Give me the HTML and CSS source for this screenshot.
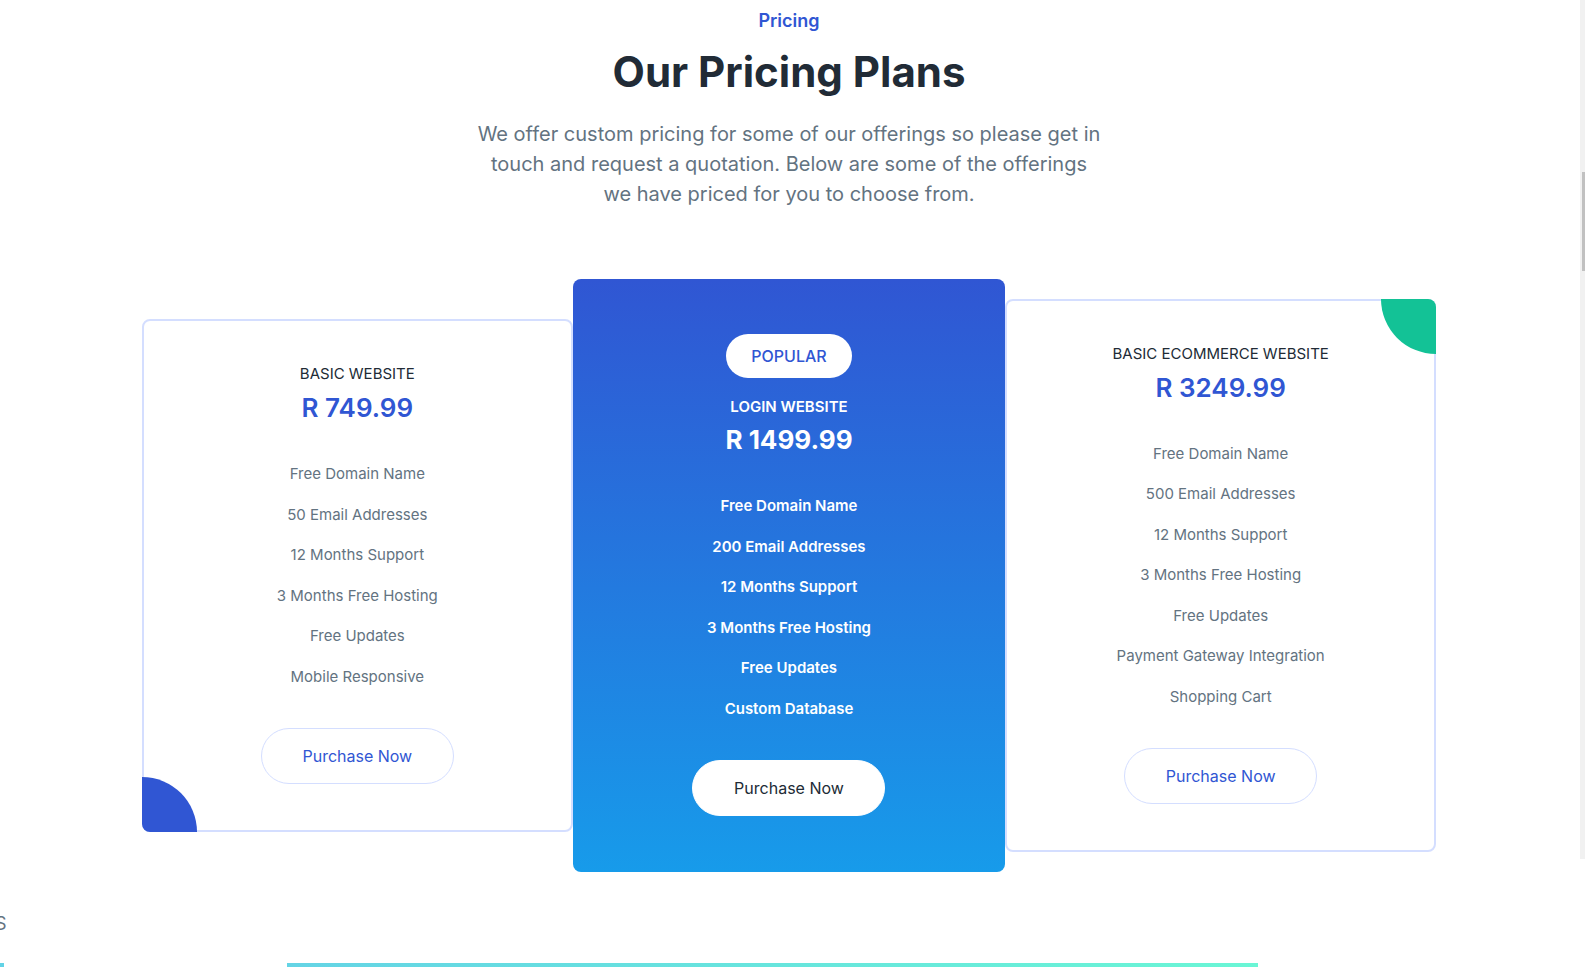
FILE: index.html
```html
<!DOCTYPE html>
<html lang="en">
<head>
    <meta charset="UTF-8">
    <meta name="viewport" content="width=device-width, initial-scale=1.0">
    <title>Pricing</title>
    <link rel="stylesheet" href="styles.css">
</head>
<body>
    <section class="pricing">
        <div class="pricing-head">
            <span class="eyebrow">Pricing</span>
            <h2 class="pricing-title">Our Pricing Plans</h2>
            <p class="pricing-lead">We offer custom pricing for some of our offerings so please get in touch and request a quotation. Below are some of the offerings we have priced for you to choose from.</p>
        </div>

        <div class="plans">
            <div class="plan">
                <h3 class="plan-name">Basic Website</h3>
                <p class="plan-price">R 749.99</p>
                <ul class="plan-features">
                    <li>Free Domain Name</li>
                    <li>50 Email Addresses</li>
                    <li>12 Months Support</li>
                    <li>3 Months Free Hosting</li>
                    <li>Free Updates</li>
                    <li>Mobile Responsive</li>
                </ul>
                <a href="#" class="plan-btn">Purchase Now</a>
                <span class="plan-shape shape-blue"></span>
            </div>

            <div class="plan plan-popular">
                <span class="plan-badge">POPULAR</span>
                <h3 class="plan-name">Login Website</h3>
                <p class="plan-price">R 1499.99</p>
                <ul class="plan-features">
                    <li>Free Domain Name</li>
                    <li>200 Email Addresses</li>
                    <li>12 Months Support</li>
                    <li>3 Months Free Hosting</li>
                    <li>Free Updates</li>
                    <li>Custom Database</li>
                </ul>
                <a href="#" class="plan-btn">Purchase Now</a>
            </div>

            <div class="plan">
                <h3 class="plan-name">Basic Ecommerce Website</h3>
                <p class="plan-price">R 3249.99</p>
                <ul class="plan-features">
                    <li>Free Domain Name</li>
                    <li>500 Email Addresses</li>
                    <li>12 Months Support</li>
                    <li>3 Months Free Hosting</li>
                    <li>Free Updates</li>
                    <li>Payment Gateway Integration</li>
                    <li>Shopping Cart</li>
                </ul>
                <a href="#" class="plan-btn">Purchase Now</a>
                <span class="plan-shape shape-green"></span>
            </div>
        </div>
    </section>

    <section class="next">
        <p class="next-label">S</p>
        <div class="next-bars">
            <span class="bar bar-edge"></span>
            <span class="bar bar-main"></span>
        </div>
    </section>

    <div class="scrollbar"><div class="scrollbar-thumb"></div></div>
</body>
</html>
```

FILE: styles.css
```css
* {
    margin: 0;
    padding: 0;
    box-sizing: border-box;
}

html,
body {
    overflow: hidden;
}

body {
    background: #fff;
    font-family: Inter, 'Noto Sans', sans-serif;
    color: #637381;
    padding-right: 7px;
    height: 967px;
}

.pricing {
    padding-top: 7px;
}

.pricing-head {
    display: flex;
    flex-direction: column;
    align-items: center;
    text-align: center;
}

.eyebrow {
    display: block;
    font-size: 18px;
    line-height: 28px;
    font-weight: 600;
    color: #3056d3;
}

.pricing-title {
    margin-top: 11px;
    font-size: 42px;
    line-height: 52.8px;
    font-weight: 700;
    color: #212b36;
}

.pricing-lead {
    margin-top: 20px;
    max-width: 624px;
    font-size: 20px;
    line-height: 30px;
    color: #637381;
}

.plans {
    width: 1295px;
    margin: 70px auto 0;
    display: grid;
    grid-template-columns: repeat(3, 1fr);
    align-items: center;
}

.plan {
    position: relative;
    display: flex;
    flex-direction: column;
    align-items: center;
    text-align: center;
    background: #fff;
    border: 2px solid #d4deff;
    border-radius: 8px;
    padding: 41px 20px 46px;
}

.plan-name {
    font-size: 15px;
    line-height: 24px;
    font-weight: 400;
    text-transform: uppercase;
    color: #212b36;
}

.plan-price {
    margin-top: 4px;
    font-size: 26px;
    line-height: 36px;
    font-weight: 600;
    color: #3056d3;
}

.plan-features {
    list-style: none;
    margin: 36px 0 39.5px;
    display: flex;
    flex-direction: column;
    gap: 16.5px;
    font-size: 15px;
    line-height: 24px;
    color: #637381;
}

.plan-btn {
    display: block;
    width: 193px;
    padding: 15px 0;
    border: 1px solid #d4deff;
    border-radius: 999px;
    font-size: 16px;
    line-height: 24px;
    color: #3056d3;
    text-decoration: none;
    text-align: center;
}

.plan-popular {
    border: none;
    border-radius: 8px;
    background: linear-gradient(180deg, #3056d3 0%, #179bea 100%);
    padding: 55px 20px 56px;
}

.plan-badge {
    display: block;
    margin-bottom: 17.5px;
    padding: 10px 25.5px;
    background: #fff;
    border-radius: 999px;
    font-size: 16px;
    line-height: 24px;
    font-weight: 500;
    color: #3056d3;
}

.plan-popular .plan-name {
    font-weight: 600;
    color: #fff;
}

.plan-popular .plan-price {
    margin-top: 3px;
    font-weight: 700;
    color: #fff;
}

.plan-popular .plan-features {
    font-weight: 600;
    color: #fff;
}

.plan-popular .plan-btn {
    background: #fff;
    border-color: #fff;
    color: #212b36;
}

/* corner decorations */
.plan-shape {
    position: absolute;
    width: 55px;
    height: 55px;
}

.shape-blue {
    left: -2px;
    bottom: -2px;
    background: #3056d3;
    border-radius: 0 55px 0 8px;
}

.shape-green {
    right: -2px;
    top: -2px;
    background: #13c296;
    border-radius: 0 8px 0 55px;
}

/* start of the next section */
.next {
    margin-top: 38px;
}

.next-label {
    margin-left: -5px;
    font-size: 18px;
    line-height: 28px;
    color: #637381;
}

.next-bars {
    display: flex;
    margin-top: 25px;
    height: 5px;
}

.bar {
    display: block;
    height: 5px;
}

.bar-edge {
    width: 4px;
    background: #62d3e6;
}

.bar-main {
    width: 971px;
    margin-left: 283px;
    background: linear-gradient(90deg, #64d4e5 0%, #6af6d5 100%);
}

.scrollbar {
    position: fixed;
    top: 0;
    right: 0;
    width: 5px;
    height: 859px;
    background: #f1f1f1;
}

.scrollbar-thumb {
    width: 3px;
    height: 99px;
    margin: 172px 0 0 2px;
    background: #c1c1c1;
}
```
